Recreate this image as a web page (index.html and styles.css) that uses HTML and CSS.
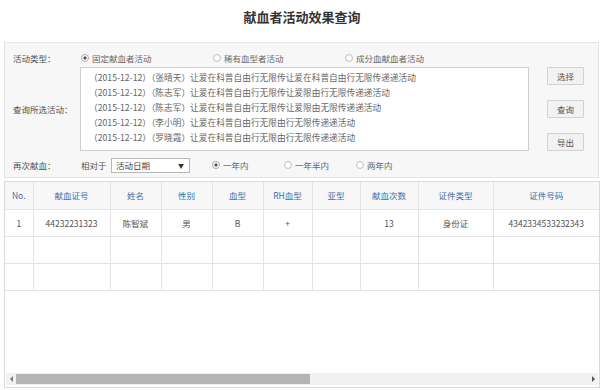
FILE: index.html
```html
<!DOCTYPE html>
<html lang="zh-CN">
<head>
    <meta charset="UTF-8">
    <title>献血者活动效果查询</title>
    <link rel="stylesheet" href="styles.css">
</head>
<body>

    <h1 class="title">献血者活动效果查询</h1>

    <div class="filter">
        <div class="row row-type">
            <span class="label">活动类型：</span>
            <span class="radio on wide">固定献血者活动</span>
            <span class="radio wide">稀有血型者活动</span>
            <span class="radio wide">成分血献血者活动</span>
        </div>

        <div class="row row-list">
            <span class="label">查询所选活动：</span>
            <div class="list">
                <div>（2015-12-12）（张晴天）让爱在科普自由行无限传让爱在科普自由行无限传递递活动</div>
                <div>（2015-12-12）（陈志军）让爱在科普自由行无限传让爱限由行无限传递递活动</div>
                <div>（2015-12-12）（陈志军）让爱在科普自由行无限传让爱限由无限传递递活动</div>
                <div>（2015-12-12）（李小明）让爱在科普自由行无限由行无限传递递活动</div>
                <div>（2015-12-12）（罗晓霞）让爱在科普自由行无限由行无限传递递活动</div>
            </div>
            <div class="btns">
                <button>选择</button>
                <button>查询</button>
                <button>导出</button>
            </div>
        </div>

        <div class="row row-again">
            <span class="label">再次献血：</span>
            <span class="rel">相对于</span>
            <div class="select">活动日期<span class="arrow">▼</span></div>
            <span class="radio on">一年内</span>
            <span class="radio">一年半内</span>
            <span class="radio">两年内</span>
        </div>
    </div>

    <div class="grid">
        <table>
            <thead>
                <tr>
                    <th class="c-no">No.</th>
                    <th class="c-card">献血证号</th>
                    <th class="c-name">姓名</th>
                    <th class="c-sex">性别</th>
                    <th class="c-abo">血型</th>
                    <th class="c-rh">RH血型</th>
                    <th class="c-sub">亚型</th>
                    <th class="c-cnt">献血次数</th>
                    <th class="c-idt">证件类型</th>
                    <th>证件号码</th>
                </tr>
            </thead>
            <tbody>
                <tr>
                    <td>1</td>
                    <td>44232231323</td>
                    <td>陈智斌</td>
                    <td>男</td>
                    <td>B</td>
                    <td>+</td>
                    <td></td>
                    <td>13</td>
                    <td>身份证</td>
                    <td>4342334533232343</td>
                </tr>
                <tr>
                    <td></td><td></td><td></td><td></td><td></td>
                    <td></td><td></td><td></td><td></td><td></td>
                </tr>
                <tr>
                    <td></td><td></td><td></td><td></td><td></td>
                    <td></td><td></td><td></td><td></td><td></td>
                </tr>
            </tbody>
        </table>

        <div class="hscroll">
            <span class="arr arr-left"></span>
            <span class="track"><span class="thumb"></span></span>
            <span class="arr arr-right"></span>
        </div>
    </div>

</body>
</html>
```

FILE: styles.css
```css
body {
    margin: 0;
    font-family: "Noto Sans CJK SC", "Liberation Sans", sans-serif;
    font-size: 8.5px;
    color: #555;
    background-color: #fff;
}

.title {
    margin: 0;
    height: 42px;
    line-height: 34px;
    text-align: center;
    font-size: 13px;
    font-weight: bold;
    color: #333;
}

/* filtro */
.filter {
    margin: 0 5px 0 4px;
    height: 136px;
    padding: 0 0 0 8px;
    background-color: #f7f7f7;
    border: 1px solid #e3e3e3;
    box-sizing: border-box;
}

.row {
    display: flex;
    align-items: center;
}

.label {
    width: 67px;
    flex: none;
    color: #505050;
}

.row-type {
    height: 24px;
    padding-top: 5px;
    box-sizing: border-box;
}

.radio {
    display: flex;
    align-items: center;
    width: 72px;
    flex: none;
    color: #666;
}

.radio.wide {
    width: 132px;
}

.radio::before {
    content: "";
    width: 6px;
    height: 6px;
    margin: 0 3px 0 1px;
    border: 1px solid #c4c4c4;
    border-radius: 50%;
    background: radial-gradient(circle, #fff 40%, #e6e6e6 100%);
}

.radio.on::before {
    background: radial-gradient(circle, #555 30%, #fff 45%);
    border-color: #aaa;
}

.row-list {
    height: 84px;
}

.list {
    width: 449px;
    height: 84px;
    padding: 2px 0 0 8px;
    box-sizing: border-box;
    background-color: #fff;
    border: 1px solid #cfcfcf;
    line-height: 15px;
    font-size: 8.7px;
    color: #666;
}

.btns {
    height: 84px;
    margin-left: 18px;
    display: flex;
    flex-direction: column;
    justify-content: space-between;
}

button {
    width: 37px;
    height: 18px;
    padding: 0;
    font-family: inherit;
    font-size: 8.5px;
    color: #555;
    background-color: #f2f2f2;
    border: 1px solid #d2d2d2;
    border-radius: 1px;
}

.row-again {
    height: 22px;
    padding-top: 3px;
}

.rel {
    width: 30px;
    margin-left: 1px;
}

.select {
    width: 79px;
    height: 15px;
    margin-right: 21px;
    padding: 0 5px 0 4px;
    box-sizing: border-box;
    display: flex;
    align-items: center;
    justify-content: space-between;
    background-color: #fff;
    border: 1px solid #b8b8b8;
    color: #444;
}

.arrow {
    font-size: 6px;
    color: #333;
}

/* tabla */
.grid {
    margin: 3px 4px 0 4px;
    height: 207px;
    border: 1px solid #d9d9d9;
    box-sizing: border-box;
    display: flex;
    flex-direction: column;
    justify-content: space-between;
}

table {
    width: 100%;
    border-collapse: collapse;
    table-layout: fixed;
}

th, td {
    height: 27px;
    padding: 0;
    text-align: center;
    border: 1px solid #e4e4e4;
    box-sizing: border-box;
    font-weight: normal;
}

th {
    background-color: #f7f7f7;
    color: #3d6fa6;
    border-top: none;
}

td {
    color: #555;
}

tr > :first-child {
    border-left: none;
}

tr > :last-child {
    border-right: none;
}

.c-no { width: 28px; }
.c-card { width: 77px; }
.c-name { width: 51px; }
.c-sex { width: 51px; }
.c-abo { width: 51px; }
.c-rh { width: 49px; }
.c-sub { width: 48px; }
.c-cnt { width: 58px; }
.c-idt { width: 75px; }

.hscroll {
    height: 12px;
    margin: 0 1px 2px 1px;
    display: flex;
    align-items: center;
    background-color: #f1f1f1;
}

.arr {
    width: 10px;
    height: 12px;
    display: flex;
    align-items: center;
    justify-content: center;
}

.arr::before {
    content: "";
    border-top: 3px solid transparent;
    border-bottom: 3px solid transparent;
}

.arr-left::before {
    border-right: 3px solid #777;
}

.arr-right::before {
    border-left: 3px solid #555;
}

.track {
    flex: 1;
    height: 10px;
}

.thumb {
    display: block;
    width: 294px;
    height: 10px;
    background-color: #b4b4b4;
}
```
